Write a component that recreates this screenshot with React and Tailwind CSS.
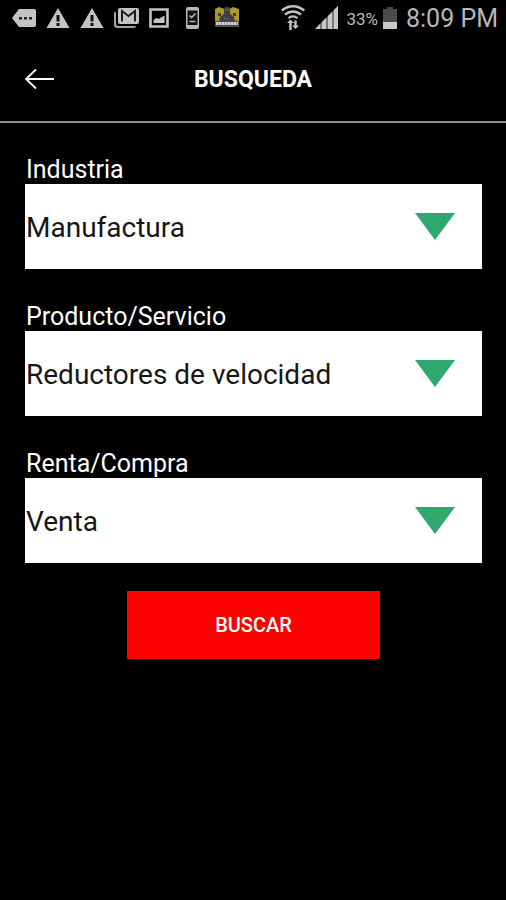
import { useState } from "react";

const campos = [
  {
    id: "industria",
    label: "Industria",
    opciones: ["Manufactura"],
  },
  {
    id: "producto",
    label: "Producto/Servicio",
    opciones: ["Reductores de velocidad"],
  },
  {
    id: "operacion",
    label: "Renta/Compra",
    opciones: ["Venta"],
  },
];

function AlertIcon() {
  return (
    <svg viewBox="0 0 24 22" className="w-6 h-[22px]" aria-hidden="true">
      <path d="M12 1 23.5 21H.5Z" fill="#c4c4c4" />
      <path d="M10.500 8h3v6.500h-3zM10.500 16h3v3h-3z" fill="#111" />
    </svg>
  );
}

function NotificationIcons() {
  return (
    <div className="flex items-center gap-[10px]">
      {/* Mensaje */}
      <svg viewBox="0 0 24 20" className="w-6 h-5" aria-hidden="true">
        <path d="M7 1h15q2 0 2 2v14q0 2-2 2H7L0 10Z" fill="#c4c4c4" />
        <path d="M7 9h3v2.500H7zM12 9h3v2.500h-3zM17 9h3v2.500h-3z" fill="#222" />
      </svg>

      <AlertIcon />
      <AlertIcon />

      {/* Correo */}
      <svg viewBox="0 0 25 22" className="w-[25px] h-[22px]" aria-hidden="true">
        <path d="M0 6q0-1 1-1h1v12q0 2 2 2h18q0 2-2 2H3q-3 0-3-3Z" fill="#a2a2a2" />
        <path d="M6 1h17q2 0 2 2v12q0 2-2 2H6q-2 0-2-2V3q0-2 2-2Z" fill="#c4c4c4" />
        <path d="M8 14.500V4l6.500 5L21 4v10.500" fill="none" stroke="#1c1c1c" strokeWidth="2" />
      </svg>

      {/* Imagen */}
      <svg viewBox="0 0 20 22" className="w-5 h-[22px]" aria-hidden="true">
        <path d="M1.500 2.500h17v17h-17z" fill="none" stroke="#c4c4c4" strokeWidth="2.600" />
        <path d="M4.500 16v-3l3-2 2 1 2.500-1.500 2.500-1.500h1v7Z" fill="#c4c4c4" />
      </svg>

      {/* Dispositivo */}
      <svg viewBox="0 0 26 24" className="w-[26px] h-6" aria-hidden="true">
        <rect x="7" y="1" width="13" height="22" rx="2" fill="#b8b8b8" />
        <path d="M8.500 4.500h10v14.500h-10z" fill="#111" />
        <path d="m10.500 9.500 2 2L16.500 7.500M10.500 15.500h6" fill="none" stroke="#b4b4b4" strokeWidth="1.600" />
      </svg>

      {/* Juego */}
      <svg viewBox="0 0 24 22" className="w-6 h-[22px]" aria-hidden="true">
        <path d="M0 2 4 0l6 2v12H0ZM14 2l4-2 6 2v12H14Z" fill="#a89a2c" />
        <path d="M3 6h3v3H3zM18 6h3v3h-3zM5 11h2v4H5zM17 11h2v4h-2z" fill="#4a4214" />
        <path d="M9 1q3-3 6 0v6l4 3 1 5H4l1-5 4-3Z" fill="#403f43" />
        <path d="M10 2h4v2h-4zM9 10l6 2v1l-6-1Z" fill="#5b595e" />
        <path d="M0 14h24v6H0z" fill="#504f50" />
        <path d="M1 16.500h22" stroke="#d0d0d0" strokeWidth="3" strokeDasharray="2.600 .4" />
      </svg>
    </div>
  );
}

function StatusBar() {
  return (
    <div className="flex justify-between items-center h-9 pl-3 pr-2 text-[#b8b8b8]">
      <NotificationIcons />

      <div className="flex items-center">
        {/* Wifi */}
        <svg viewBox="0 0 24 26" className="w-6 h-[26px]" aria-hidden="true">
          <g fill="none" stroke="#c4c4c4" strokeWidth="2.200">
            <path d="M.7 5.500q11.300-8.500 22.600 0" />
            <path d="M4 9.500q8-6 16 0" />
            <path d="M7.500 13.200q4.500-3.500 9 0" />
          </g>
          <path d="M9.500 14.500 13 18h-2.300v7H8.300v-7H6ZM14.500 24 11 20.500h2.300v-5h2.400v5H18Z" fill="#c4c4c4" />
        </svg>

        {/* Señal */}
        <svg viewBox="0 0 24 24" className="w-6 h-6 ml-[10px]" aria-hidden="true">
          <path d="M0 23 23 0v23Z" fill="#777" />
          <path d="M0 23l5-5v5ZM7 16l4-4v11H7ZM13 10l4-4v17h-4ZM19 4l4-4v23h-4Z" fill="#c8c8c8" />
        </svg>

        <span className="ml-[7px] pt-0.5 text-[17px] leading-6">33%</span>

        {/* Batería */}
        <svg viewBox="0 0 16 24" className="w-4 h-6 ml-1" aria-hidden="true">
          <path d="M5 1h6v2h4v20H1V3h4Z" fill="#4b4b4b" />
          <path d="M1 16h14v7H1z" fill="#c8c8c8" />
        </svg>

        <span className="ml-2 pt-0.5 text-[25px] leading-9">8:09 PM</span>
      </div>
    </div>
  );
}

function Header() {
  return (
    <header className="grid grid-cols-[1fr_auto_1fr] items-center h-[87px] px-6 border-b-2 border-[#8c8c8c]">
      <button type="button" aria-label="Regresar" className="w-8 h-8 text-white">
        <svg viewBox="0 0 32 32" className="w-8 h-8" fill="none" stroke="currentColor" strokeWidth="1.800">
          <path d="M30 16H2M12 6.500 2 16l10 9.500" />
        </svg>
      </button>
      <h1 className="pt-0.5 text-[23px] leading-8 font-bold text-white">BUSQUEDA</h1>
    </header>
  );
}

function SelectField({ id, label, opciones }) {
  const [valor, setValor] = useState(opciones[0]);

  return (
    <div className="flex flex-col">
      <label htmlFor={id} className="pt-0.5 pl-px text-[25px] leading-7 text-white">
        {label}
      </label>
      <div className="grid items-center bg-white">
        <select
          id={id}
          value={valor}
          onChange={(e) => setValor(e.target.value)}
          className="col-start-1 row-start-1 appearance-none w-full h-[85px] pt-0.5 pl-px pr-20 text-[28px] text-[#161616] bg-transparent"
        >
          {opciones.map((opcion) => (
            <option key={opcion}>{opcion}</option>
          ))}
        </select>
        <svg
          viewBox="0 0 40 27"
          className="col-start-1 row-start-1 justify-self-end w-10 h-[27px] mr-[27px] pointer-events-none"
          aria-hidden="true"
        >
          <path d="M0 0h40L20 27Z" fill="#2fa870" />
        </svg>
      </div>
    </div>
  );
}

export default function App() {
  return (
    <div className="min-h-screen bg-black font-['Roboto',sans-serif]">
      <StatusBar />
      <Header />

      <form onSubmit={(e) => e.preventDefault()} className="flex flex-col pl-[25px] pr-6 pt-[31px]">
        <div className="flex flex-col gap-8">
          {campos.map((campo) => (
            <SelectField key={campo.id} {...campo} />
          ))}
        </div>

        <button
          type="submit"
          className="self-center w-[55.5%] h-[68px] mt-7 bg-[#ff0000] text-[20px] font-medium text-white"
        >
          BUSCAR
        </button>
      </form>
    </div>
  );
}
